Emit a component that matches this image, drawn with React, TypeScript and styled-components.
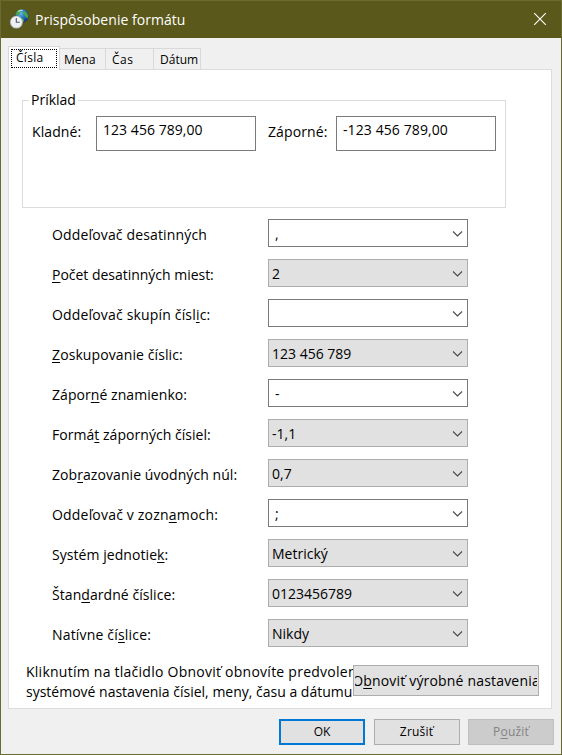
import React from "react";
import styled, { createGlobalStyle } from "styled-components";

const GlobalStyle = createGlobalStyle`
  * { box-sizing: border-box; }
  body { margin: 0; }
`;

const Window = styled.main`
  width: 562px;
  height: 755px;
  display: flex;
  flex-direction: column;
  border: 1px solid #6b6a30;
  background: #f0f0f0;
  color: #000;
  font-family: "Open Sans", "Noto Sans", sans-serif;
  font-size: 14px;
  line-height: 20px;
  overflow: hidden;
`;

const TitleBar = styled.header`
  height: 37px;
  flex: none;
  display: flex;
  align-items: center;
  padding: 0 14px 0 8px;
  background: #5a581b;
  color: #fff;

  svg {
    display: block;
    margin-bottom: 1px;
  }
`;

const Title = styled.h1`
  flex: 1;
  margin: 0 0 0 6px;
  font-size: 14px;
  font-weight: 400;
  letter-spacing: 0.04px;
`;

const CloseButton = styled.button`
  display: flex;
  padding: 0;
  border: 0;
  background: none;
`;

const Text = styled.span<{ $spacing?: number }>`
  white-space: pre;
  letter-spacing: ${(p) => p.$spacing ?? 0}px;

  u {
    text-decoration-thickness: 1px;
    text-underline-offset: 2px;
    text-decoration-skip-ink: none;
  }
`;

const TabStrip = styled.nav`
  height: 31px;
  flex: none;
  display: flex;
  align-items: flex-end;
  padding-left: 7px;
`;

const Tab = styled.button<{ $width: number; $inset?: number; $active?: boolean }>`
  position: relative;
  z-index: ${(p) => (p.$active ? 1 : 0)};
  width: ${(p) => p.$width}px;
  height: ${(p) => (p.$active ? 24 : 21)}px;
  display: flex;
  align-items: center;
  padding: ${(p) => (p.$active ? 0 : 1)}px 0 0 ${(p) => p.$inset ?? 6}px;
  border: 1px solid #d9d9d9;
  border-bottom: 0;
  border-left-width: ${(p) => (p.$active ? 1 : 0)}px;
  margin-bottom: ${(p) => (p.$active ? -1 : 0)}px;
  background: ${(p) => (p.$active ? "#fff" : "#f0f0f0")};
  color: #000;
  font: 12px/16px "Open Sans", "Noto Sans", sans-serif;
`;

const FocusRect = styled.span`
  width: 46px;
  height: 19px;
  display: flex;
  align-items: center;
  padding: 0 0 2px 4px;
  border: 1px dotted #000;
`;

const Panel = styled.section`
  width: 544px;
  height: 640px;
  flex: none;
  display: flex;
  flex-direction: column;
  margin-left: 7px;
  border: 1px solid #dcdcdc;
  background: #fff;
`;

const Example = styled.fieldset`
  width: 484px;
  height: 116px;
  flex: none;
  display: flex;
  margin: 22px 0 0 13px;
  padding: 0 9px;
  border: 1px solid #dcdcdc;
  min-width: 0;
`;

const Legend = styled.legend`
  height: 16px;
  margin-left: -3px;
  padding: 0 2px;
  line-height: 16px;
`;

const ExampleLabel = styled.span<{ $width: number }>`
  width: ${(p) => p.$width}px;
  flex: none;
  padding-top: 14px;
`;

const ExampleValue = styled.output`
  width: 160px;
  height: 35px;
  flex: none;
  margin: 8px 12px 0 0;
  padding: 3px 7px 3px 6px;
  border: 1px solid #7a7a7a;

  &:last-child {
    margin-right: 0;
  }
`;

const Form = styled.div`
  display: grid;
  grid-template-columns: 216px 200px;
  grid-auto-rows: 28px;
  row-gap: 12px;
  margin: 11px 0 0 43px;
`;

const FieldLabel = styled.label`
  padding-top: 6px;
`;

const Combo = styled.div<{ $editable?: boolean }>`
  display: flex;
  align-items: center;
  justify-content: space-between;
  padding: 2px 4px 0 ${(p) => (p.$editable ? 6 : 3)}px;
  border: 1px solid ${(p) => (p.$editable ? "#7a7a7a" : "#adadad")};
  background: ${(p) => (p.$editable ? "#fff" : "#e1e1e1")};
`;

const ResetRow = styled.div`
  display: flex;
  margin: 15px 0 0 17px;
`;

const ResetNote = styled.p`
  width: 327px;
  display: flex;
  flex-direction: column;
  margin: 0;
  overflow: hidden;
`;

const PushButton = styled.button<{ $kind?: "default" | "disabled" | "reset" }>`
  width: ${(p) => (p.$kind === "reset" ? 186 : 86)}px;
  height: ${(p) => (p.$kind === "reset" ? 31 : 26)}px;
  flex: none;
  display: flex;
  align-items: center;
  justify-content: center;
  margin-top: ${(p) => (p.$kind === "reset" ? 3 : 0)}px;
  padding: 0;
  overflow: hidden;
  border: ${(p) => (p.$kind === "default" ? "2px solid #0078d7" : p.$kind === "disabled" ? "1px solid #bfbfbf" : "1px solid #adadad")};
  background: ${(p) => (p.$kind === "disabled" ? "#ccc" : "#e1e1e1")};
  color: ${(p) => (p.$kind === "disabled" ? "#838383" : "#000")};
  font: ${(p) => (p.$kind === "reset" ? 14 : 12)}px/20px "Open Sans", "Noto Sans", sans-serif;
`;

const ButtonClip = styled.span`
  width: 182px;
  display: flex;
  justify-content: center;
  overflow: hidden;
`;

const Footer = styled.footer`
  display: flex;
  justify-content: flex-end;
  gap: 8.5px;
  padding: 10px 7px 0 0;
`;

/* A mnemonic letter is marked with a leading ampersand. */
function Caption({ text, spacing }: { text: string; spacing?: number }) {
  const at = text.indexOf("&");
  return (
    <Text $spacing={spacing}>
      {at < 0 ? text : <>{text.slice(0, at)}<u>{text[at + 1]}</u>{text.slice(at + 2)}</>}
    </Text>
  );
}

function RegionIcon() {
  return (
    <svg width="20" height="20" viewBox="0 0 20 20">
      <defs>
        <radialGradient id="sea" cx="0.4" cy="0.3" r="0.75">
          <stop offset="0" stopColor="#65b9ed" />
          <stop offset="0.55" stopColor="#2069bd" />
          <stop offset="1" stopColor="#102b70" />
        </radialGradient>
      </defs>
      <circle cx="12.9" cy="7" r="6.8" fill="url(#sea)" />
      <path d="M6.8 4.5 9 1.4l3-.9.5 1.5-2 1.2.5 2-2.5 1.5zM14 2l3.2 1.2 2 3.3-.4 3-2-1.4-2-2.8zM11 9l3 .6 1.2 2.2-1.6 2z" fill="#4ba83f" />
      <path d="M9 2.4q2-1.4 4.5-1" stroke="#c8f0dd" fill="none" />
      <circle cx="7.4" cy="13.2" r="6.4" fill="#b9bfc5" />
      <circle cx="7.4" cy="13" r="5.5" fill="#eef2f5" />
      <path d="M7.3 9v4.3h3.4" stroke="#485563" strokeWidth="1.1" fill="none" />
    </svg>
  );
}

function Chevron() {
  return (
    <svg width="11" height="8" viewBox="0 0 11 8">
      <path d="M1 1.5 5.5 6 10 1.5" fill="none" stroke="#484848" strokeWidth="1.1" />
    </svg>
  );
}

type Field = { label: string; value: string; editable?: boolean; spacing?: number };

const fields: Field[] = [
  { label: "Oddeľovač desatinných", value: ",", editable: true, spacing: 0.15 },
  { label: "&Počet desatinných miest:", value: "2", spacing: -0.02 },
  { label: "Oddeľovač skupín čísl&ic:", value: "", editable: true, spacing: 0.17 },
  { label: "&Zoskupovanie číslic:", value: "123 456 789", spacing: 0.1 },
  { label: "Zápor&né znamienko:", value: "-", editable: true, spacing: 0.06 },
  { label: "Formá&t záporných čísiel:", value: "-1,1", spacing: 0.04 },
  { label: "Zob&razovanie úvodných núl:", value: "0,7", spacing: 0.07 },
  { label: "Oddeľovač v zozn&amoch:", value: ";", editable: true, spacing: 0.19 },
  { label: "Systém jednotie&k:", value: "Metrický", spacing: 0.06 },
  { label: "Štan&dardné číslice:", value: "0123456789", spacing: 0.06 },
  { label: "Natívne čí&slice:", value: "Nikdy", spacing: 0.18 },
];

export default function App() {
  return (
    <>
      <GlobalStyle />
      <Window>
        <TitleBar>
          <RegionIcon />
          <Title>Prispôsobenie formátu</Title>
          <CloseButton aria-label="Zavrieť">
            <svg width="14" height="14" viewBox="0 0 14 14">
              <path d="m1.2 1.2 11.6 11.6m0-11.6L1.2 12.8" stroke="#fff" strokeWidth="1.1" />
            </svg>
          </CloseButton>
        </TitleBar>
        <TabStrip>
          <Tab $width={52} $inset={2} $active>
            <FocusRect><Caption text="Čísla" spacing={0.3} /></FocusRect>
          </Tab>
          <Tab $width={46} $inset={4}><Caption text="Mena" /></Tab>
          <Tab $width={48}><Caption text="Čas" spacing={0.5} /></Tab>
          <Tab $width={47}><Caption text="Dátum" /></Tab>
        </TabStrip>
        <Panel>
          <Example>
            <Legend><Caption text="Príklad" /></Legend>
            <ExampleLabel $width={64}><Caption text="Kladné:" spacing={0.1} /></ExampleLabel>
            <ExampleValue><Caption text="123 456 789,00" spacing={0.05} /></ExampleValue>
            <ExampleLabel $width={68}><Caption text="Záporné:" spacing={0.1} /></ExampleLabel>
            <ExampleValue><Caption text="-123 456 789,00" spacing={0.1} /></ExampleValue>
          </Example>
          <Form>
            {fields.map((f) => (
              <React.Fragment key={f.label}>
                <FieldLabel><Caption text={f.label} spacing={f.spacing} /></FieldLabel>
                <Combo $editable={f.editable}>
                  <Caption text={f.value} />
                  <Chevron />
                </Combo>
              </React.Fragment>
            ))}
          </Form>
          <ResetRow>
            <ResetNote>
              <Caption text="Kliknutím na tlačidlo Obnoviť obnovíte predvolené" spacing={0.25} />
              <Caption text="systémové nastavenia čísiel, meny, času a dátumu." />
            </ResetNote>
            <PushButton $kind="reset">
              <ButtonClip><Caption text="O&bnoviť výrobné nastavenia" spacing={0.18} /></ButtonClip>
            </PushButton>
          </ResetRow>
        </Panel>
        <Footer>
          <PushButton $kind="default"><Caption text="OK" /></PushButton>
          <PushButton><Caption text="Zrušiť" spacing={0.2} /></PushButton>
          <PushButton $kind="disabled"><Caption text="P&oužiť" spacing={0.2} /></PushButton>
        </Footer>
      </Window>
    </>
  );
}
